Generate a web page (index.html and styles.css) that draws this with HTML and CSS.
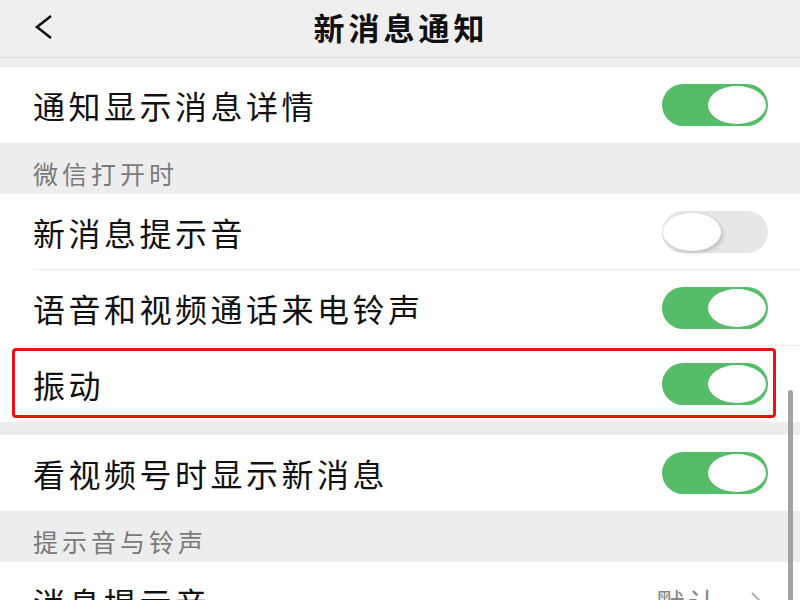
FILE: index.html
```html
<!DOCTYPE html>
<html lang="zh-CN">
<head>
<meta charset="utf-8">
<title>新消息通知</title>
<link rel="stylesheet" href="styles.css">
</head>
<body>
<div class="screen">
  <header class="nav">
    <span class="back">
      <svg width="20" height="26" viewBox="0 0 20 26"><path d="M17 2 L3 13 L17 24" fill="none" stroke="#111" stroke-width="2.6" stroke-linejoin="miter"/></svg>
    </span>
    <h1 class="title">新消息通知</h1>
  </header>
  <div class="gap"></div>
  <div class="group">
    <div class="row"><span class="label">通知显示消息详情</span><span class="switch on"><span class="knob"></span></span></div>
  </div>
  <div class="section">微信打开时</div>
  <div class="group">
    <div class="row divided"><span class="label">新消息提示音</span><span class="switch off"><span class="knob"></span></span></div>
    <div class="row divided"><span class="label">语音和视频通话来电铃声</span><span class="switch on"><span class="knob"></span></span></div>
    <div class="row"><span class="label">振动</span><span class="switch on"><span class="knob"></span></span></div>
  </div>
  <div class="gap small"></div>
  <div class="group">
    <div class="row"><span class="label">看视频号时显示新消息</span><span class="switch on"><span class="knob"></span></span></div>
  </div>
  <div class="section">提示音与铃声</div>
  <div class="group">
    <div class="row cut"><span class="label">消息提示音</span><span class="value">默认<svg class="chev" width="14" height="24" viewBox="0 0 14 24"><path d="M2 2 L12 12 L2 22" fill="none" stroke="#b0b0b0" stroke-width="2"/></svg></span></div>
  </div>
  <div class="highlight"></div>
  <div class="scrollbar"></div>
</div>
</body>
</html>
```
FILE: styles.css
```css
html, body {
  margin: 0;
  padding: 0;
}
body {
  background: #ededed;
  font-family: "Noto Sans CJK SC", "Noto Sans", sans-serif;
}
.screen {
  position: relative;
  width: 800px;
  height: 600px;
  overflow: hidden;
  background: #ededed;
}
.nav {
  height: 57px;
  display: flex;
  align-items: center;
  justify-content: center;
  position: relative;
  background: #efefef;
  border-bottom: 1px solid #dedede;
}
.back {
  position: absolute;
  left: 34px;
  top: 14px;
  display: flex;
}
.title {
  margin: 0;
  font-size: 31px;
  font-weight: 700;
  letter-spacing: 4px;
  color: #111;
  padding: 0 0 5px 2px;
  line-height: 1;
}
.gap {
  height: 8px;
  background: #f0f0f0;
  border-bottom: 1px solid #e4e4e4;
}
.gap.small {
  height: 13px;
  background: #ededed;
  border-bottom: none;
}
.group {
  background: #fff;
}
.row {
  height: 76px;
  display: flex;
  align-items: center;
  justify-content: space-between;
  padding: 0 32px 0 33px;
  position: relative;
}
.row.divided::after {
  content: "";
  position: absolute;
  left: 33px;
  right: 0;
  bottom: 0;
  height: 1px;
  background: #ececec;
}
.row.cut {
  align-items: flex-start;
  padding-top: 24px;
  box-sizing: border-box;
}
.label {
  font-size: 32px;
  letter-spacing: 3.5px;
  color: #111;
  line-height: 1;
}
.section {
  height: 51px;
  display: flex;
  align-items: center;
  padding: 9px 0 0 33px;
  box-sizing: border-box;
  font-size: 25px;
  letter-spacing: 4px;
  color: #7a7a7a;
}
.switch {
  width: 106px;
  height: 42px;
  border-radius: 21px;
  position: relative;
  flex: none;
}
.switch.on {
  background: #56bc6a;
}
.switch.off {
  background: #e7e7e7;
}
.knob {
  position: absolute;
  top: 2px;
  width: 58px;
  height: 38px;
  border-radius: 50%;
  background: #fff;
}
.switch.on .knob {
  right: 2px;
}
.switch.off .knob {
  left: 1px;
  box-shadow: 2px 2px 4px rgba(0, 0, 0, 0.18);
}
.value {
  display: flex;
  align-items: center;
  gap: 30px;
  font-size: 29px;
  letter-spacing: 3px;
  color: #888;
  line-height: 1;
  padding: 2px 4px 0 0;
}
.highlight {
  position: absolute;
  left: 12px;
  top: 348px;
  width: 758px;
  height: 64px;
  border: 3px solid #f01010;
  border-radius: 4px;
}
.scrollbar {
  position: absolute;
  left: 788px;
  top: 390px;
  width: 5px;
  height: 230px;
  border-radius: 3px;
  background: #a3a3a3;
}
```
